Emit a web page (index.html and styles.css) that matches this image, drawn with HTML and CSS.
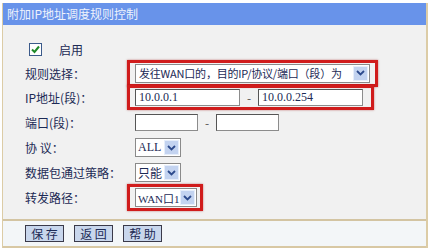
FILE: index.html
```html
<!DOCTYPE html>
<html lang="zh">
<head>
    <meta charset="UTF-8">
    <title>附加IP地址调度规则控制</title>
    <link rel="stylesheet" href="styles.css">
</head>
<body>
    <div class="panel">
        <div class="title">附加IP地址调度规则控制</div>
        <div class="content">
            <div class="row check-row">
                <span class="checkbox">
                    <svg width="11" height="11" viewBox="0 0 11 11"><path d="M2 5.5 L4.5 8 L9 2.5" fill="none" stroke="#1f8a2a" stroke-width="2"/></svg>
                </span>
                <span class="check-text">启用</span>
            </div>
            <div class="row first">
                <span class="lbl">规则选择：</span>
                <div class="mark">
                    <div class="select rule">
                        <span class="val">发往WAN口的，目的IP/协议/端口（段）为</span>
                        <span class="arrow"><svg width="9" height="6" viewBox="0 0 9 6"><path d="M1 1 L4.5 4.5 L8 1" fill="none" stroke="#2c4a8c" stroke-width="1.8"/></svg></span>
                    </div>
                </div>
            </div>
            <div class="row">
                <span class="lbl">IP地址(段)：</span>
                <div class="mark ip-mark">
                    <div class="input ip">10.0.0.1</div>
                    <span class="dash">-</span>
                    <div class="input ip">10.0.0.254</div>
                </div>
            </div>
            <div class="row">
                <span class="lbl">端口(段)：</span>
                <div class="ctrl">
                    <div class="input port"></div>
                    <span class="dash">-</span>
                    <div class="input port"></div>
                </div>
            </div>
            <div class="row">
                <span class="lbl">协&nbsp;议：</span>
                <div class="ctrl">
                    <div class="select small">
                        <span class="val">ALL</span>
                        <span class="arrow"><svg width="9" height="6" viewBox="0 0 9 6"><path d="M1 1 L4.5 4.5 L8 1" fill="none" stroke="#2c4a8c" stroke-width="1.8"/></svg></span>
                    </div>
                </div>
            </div>
            <div class="row">
                <span class="lbl">数据包通过策略：</span>
                <div class="ctrl">
                    <div class="select small">
                        <span class="val">只能</span>
                        <span class="arrow"><svg width="9" height="6" viewBox="0 0 9 6"><path d="M1 1 L4.5 4.5 L8 1" fill="none" stroke="#2c4a8c" stroke-width="1.8"/></svg></span>
                    </div>
                </div>
            </div>
            <div class="row">
                <span class="lbl">转发路径：</span>
                <div class="mark wan-mark">
                    <div class="select wan">
                        <span class="val">WAN口1</span>
                        <span class="arrow"><svg width="9" height="6" viewBox="0 0 9 6"><path d="M1 1 L4.5 4.5 L8 1" fill="none" stroke="#2c4a8c" stroke-width="1.8"/></svg></span>
                    </div>
                </div>
            </div>
        </div>
        <div class="buttons">
            <button class="btn">保&nbsp;存</button>
            <button class="btn">返&nbsp;回</button>
            <button class="btn">帮&nbsp;助</button>
        </div>
    </div>
</body>
</html>
```

FILE: styles.css
```css
body{
    margin: 0;
    background: #fff;
    font-family: "Noto Sans CJK SC", "Liberation Sans", sans-serif;
    font-size: 12px;
    color: #1c2a55;
}
.panel{
    width: 423px;
    margin: 3px 0 0 2px;
    border-left: 1px solid #dccca6;
    border-right: 2px solid #dccca6;
}
.title{
    height: 22px;
    line-height: 22px;
    background: #6893ea;
    color: #eef2fc;
    padding-left: 4px;
}
.content{
    background: #f1f1f1;
    padding: 12px 0 9px;
    border-bottom: 2px solid #d3c4a2;
}
.row{
    display: flex;
    align-items: center;
    height: 25px;
    padding-left: 22px;
}
.check-row{
    height: 24px;
    padding-left: 26px;
}
.row.first{
    height: 24px;
}
.checkbox{
    width: 11px;
    height: 11px;
    border: 1px solid #3b5a8a;
    background: #fff;
    display: flex;
}
.check-text{
    margin-left: 17px;
}
.lbl{
    width: 110px;
    flex-shrink: 0;
}
.ctrl{
    display: flex;
    align-items: center;
}
.mark{
    display: flex;
    align-items: center;
    margin-left: -8px;
    border: 3px solid #d01c1c;
    padding: 1px 5px;
    box-shadow: 0 0 2px rgba(150, 0, 0, 0.5);
}
.ip-mark{
    padding-right: 8px;
}
.wan-mark{
    padding: 1px 3px 1px 5px;
}
.select{
    display: flex;
    align-items: center;
    height: 17px;
    background: #fff;
    border: 1px solid #8a8a8a;
    font-family: "Liberation Serif", "Noto Sans CJK SC", serif;
}
.select .val{
    flex: 1;
    padding-left: 3px;
    white-space: nowrap;
    overflow: hidden;
}
.rule{
    width: 233px;
}
.rule .val{
    font-family: "Noto Sans CJK SC", sans-serif;
    font-size: 11px;
    letter-spacing: -0.2px;
}
.small{
    width: 44px;
}
.small .val{
    padding-left: 2px;
}
.wan{
    width: 60px;
}
.wan .val{
    padding-left: 2px;
    font-size: 11px;
}
.arrow{
    width: 15px;
    height: 15px;
    flex-shrink: 0;
    margin-right: 1px;
    background: #c3d3f0;
    border: 1px solid #e6eefb;
    display: flex;
    align-items: center;
    justify-content: center;
    box-sizing: border-box;
}
.input{
    height: 15px;
    background: #fff;
    border: 1px solid #8c8c8c;
    border-top-color: #555;
    border-left-color: #555;
    line-height: 15px;
    padding-left: 3px;
    font-family: "Liberation Serif", serif;
    font-size: 12px;
}
.ip{
    width: 100px;
}
.port{
    width: 58px;
}
.dash{
    width: 18px;
    text-align: center;
    color: #555;
}
.buttons{
    display: flex;
    gap: 10px;
    padding: 4px 0 4px 22px;
    background: #f3f6f8;
    border-bottom: 2px solid #d8c8a4;
}
.btn{
    width: 39px;
    height: 17px;
    padding: 0;
    background: #c8d6ec;
    border: 1px solid #3a3a4a;
    color: #1c2a55;
    font-family: "Noto Sans CJK SC", sans-serif;
    font-size: 12px;
    line-height: 15px;
}
```
